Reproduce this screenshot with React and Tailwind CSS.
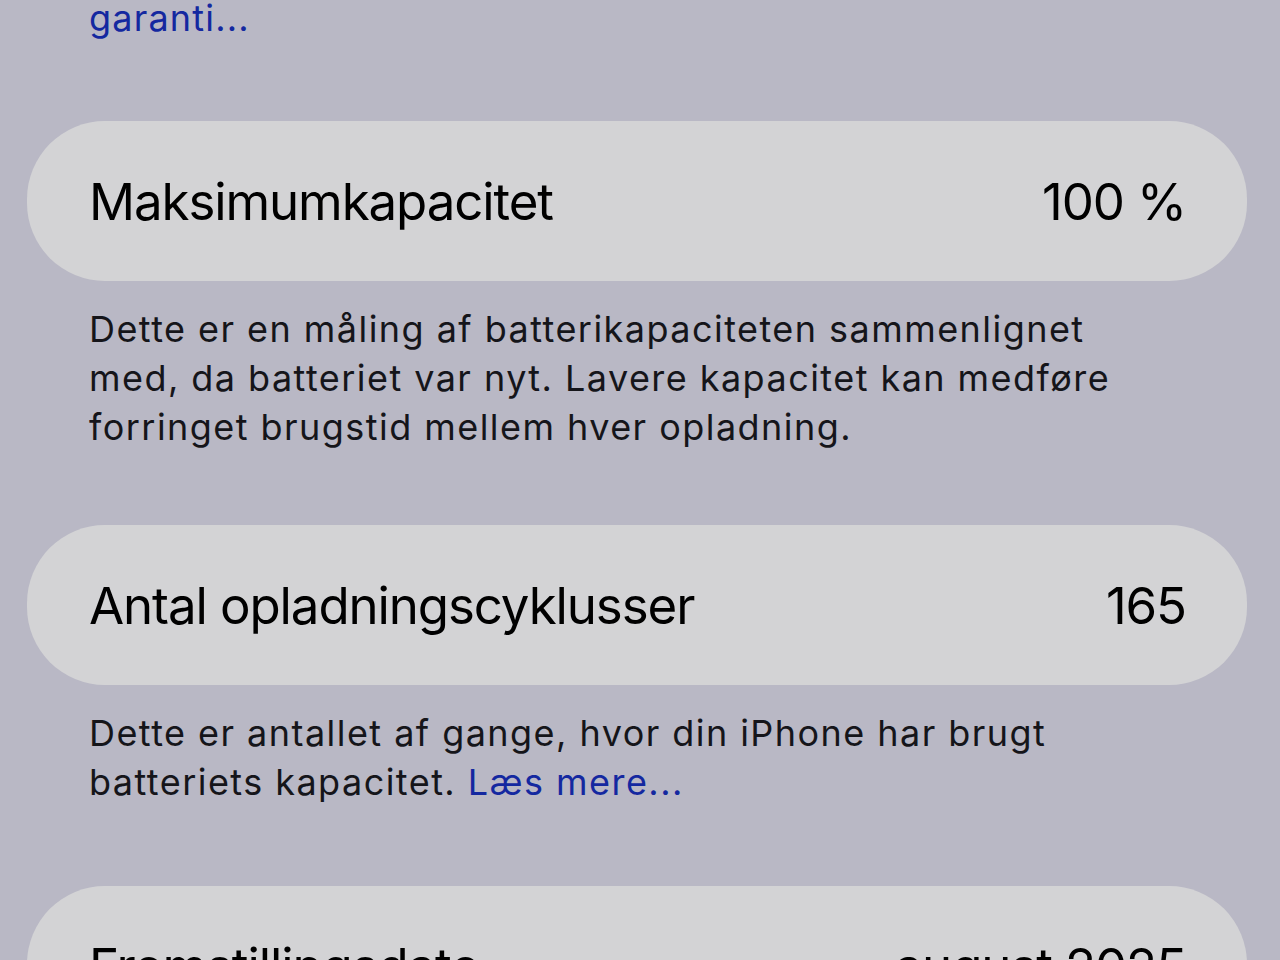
const ROWS = [
  {
    label: "Maksimumkapacitet",
    value: "100 %",
    note: [
      "Dette er en måling af batterikapaciteten sammenlignet",
      "med, da batteriet var nyt. Lavere kapacitet kan medføre",
      "forringet brugstid mellem hver opladning.",
    ],
    gap: "mb-[73px]",
  },
  {
    label: "Antal opladningscyklusser",
    value: "165",
    note: ["Dette er antallet af gange, hvor din iPhone har brugt", "batteriets kapacitet."],
    link: "Læs mere...",
    gap: "mb-[79px]",
  },
  {
    label: "Fremstillingsdato",
    value: "august 2025",
  },
];

const Row = ({ label, value }) => (
  <div className="ml-[27px] mr-[33px] h-[160px] rounded-[78px] bg-[#d3d3d5] pl-[62px] pr-[61px] flex items-center justify-between">
    <span className="text-[51px] leading-none tracking-[-1.1px] text-black">{label}</span>
    <span className="text-[51px] leading-none tracking-[-1.1px] text-black">{value}</span>
  </div>
);

const App = () => {
  return (
    <div
      className="w-[1280px] h-[960px] overflow-hidden bg-[#b9b8c5]"
      style={{ fontFamily: "Inter, 'Noto Sans', sans-serif" }}
    >
      <div className="mt-[-6px] px-[89px] text-[36px] leading-[49px] tracking-[1.2px] text-[#1428a0]">garanti...</div>
      <div className="mt-[78px]">
        {ROWS.map((row) => (
          <div key={row.label}>
            <Row label={row.label} value={row.value} />
            {row.note && (
              <p className={`mt-[24px] px-[89px] text-[36px] leading-[49px] tracking-[1.45px] text-[#15151a] whitespace-nowrap ${row.gap}`}>
                {row.note.map((line, i) => (
                  <span key={i} className="block">
                    {line}
                    {row.link && i === row.note.length - 1 && (
                      <span className="text-[#1428a0]"> {row.link}</span>
                    )}
                  </span>
                ))}
              </p>
            )}
          </div>
        ))}
      </div>
    </div>
  );
};

export default App;
